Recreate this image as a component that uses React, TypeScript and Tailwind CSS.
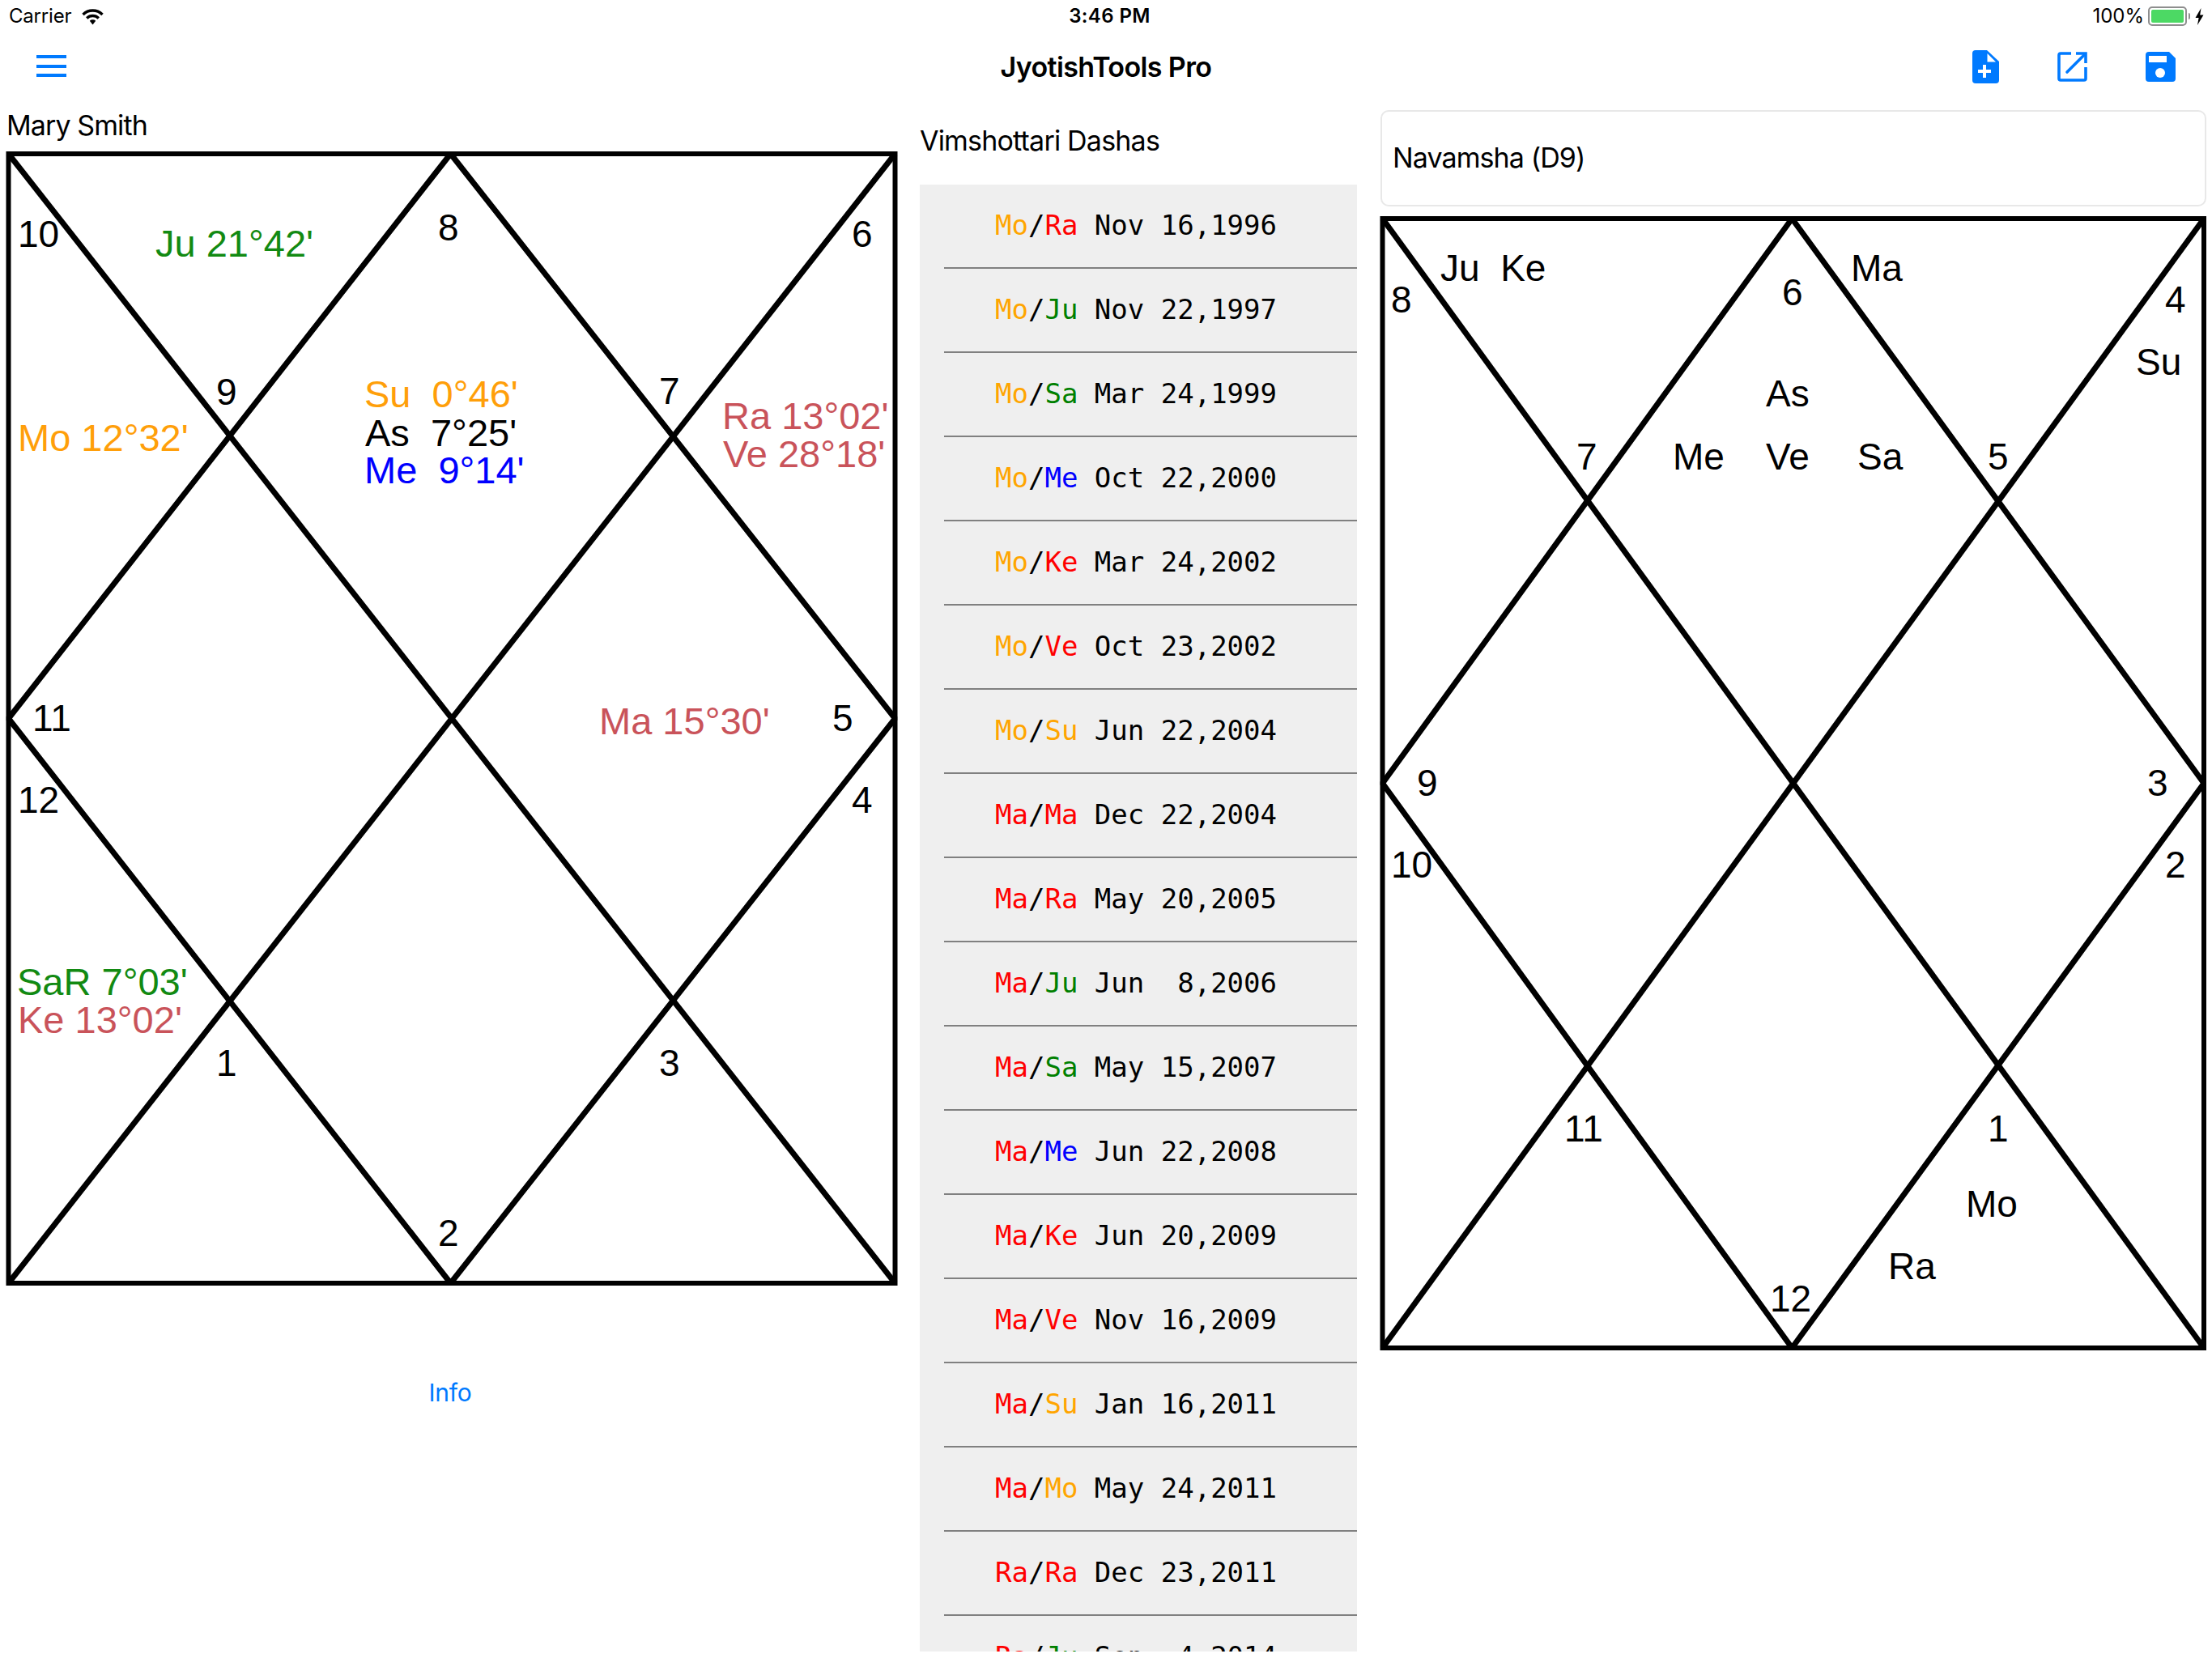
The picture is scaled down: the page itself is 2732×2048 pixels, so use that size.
import React from 'react';

const planetColors: Record<string, string> = {
  Mo: 'text-[#ffa500]',
  Su: 'text-[#ffa500]',
  Ra: 'text-[#ff0000]',
  Ke: 'text-[#ff0000]',
  Ma: 'text-[#ff0000]',
  Ve: 'text-[#ff0000]',
  Ju: 'text-[#008000]',
  Sa: 'text-[#008000]',
  Me: 'text-[#0000ff]',
};

const dashas = [
  ['Mo', 'Ra', 'Nov 16,1996'],
  ['Mo', 'Ju', 'Nov 22,1997'],
  ['Mo', 'Sa', 'Mar 24,1999'],
  ['Mo', 'Me', 'Oct 22,2000'],
  ['Mo', 'Ke', 'Mar 24,2002'],
  ['Mo', 'Ve', 'Oct 23,2002'],
  ['Mo', 'Su', 'Jun 22,2004'],
  ['Ma', 'Ma', 'Dec 22,2004'],
  ['Ma', 'Ra', 'May 20,2005'],
  ['Ma', 'Ju', 'Jun  8,2006'],
  ['Ma', 'Sa', 'May 15,2007'],
  ['Ma', 'Me', 'Jun 22,2008'],
  ['Ma', 'Ke', 'Jun 20,2009'],
  ['Ma', 'Ve', 'Nov 16,2009'],
  ['Ma', 'Su', 'Jan 16,2011'],
  ['Ma', 'Mo', 'May 24,2011'],
  ['Ra', 'Ra', 'Dec 23,2011'],
  ['Ra', 'Ju', 'Sep  4,2014'],
];

// label positions are page coordinates, the svg viewBox is set up to match
type Label = { t: string; x: number; y: number; c?: string };

const ORANGE = '#ff9f0a';
const GREEN = '#128a12';
const ROSE = '#c9535a';
const BLUE = '#0000ff';

const rasiLabels: Label[] = [
  { t: '10', x: 22, y: 305 },
  { t: '8', x: 541, y: 297 },
  { t: '6', x: 1052, y: 305 },
  { t: '9', x: 267, y: 500 },
  { t: '7', x: 814, y: 499 },
  { t: '11', x: 40, y: 903 },
  { t: '5', x: 1028, y: 903 },
  { t: '12', x: 22, y: 1004 },
  { t: '4', x: 1052, y: 1004 },
  { t: '1', x: 267, y: 1329 },
  { t: '3', x: 814, y: 1329 },
  { t: '2', x: 541, y: 1539 },
  { t: "Ju 21°42'", x: 192, y: 317, c: GREEN },
  { t: "Su  0°46'", x: 450, y: 503, c: ORANGE },
  { t: "As  7°25'", x: 451, y: 551 },
  { t: "Me  9°14'", x: 450, y: 597, c: BLUE },
  { t: "Mo 12°32'", x: 22, y: 557, c: ORANGE },
  { t: "Ra 13°02'", x: 892, y: 530, c: ROSE },
  { t: "Ve 28°18'", x: 893, y: 577, c: ROSE },
  { t: "Ma 15°30'", x: 740, y: 907, c: ROSE },
  { t: "SaR 7°03'", x: 21, y: 1229, c: GREEN },
  { t: "Ke 13°02'", x: 22, y: 1276, c: ROSE },
];

const navamshaLabels: Label[] = [
  { t: '8', x: 1718, y: 386 },
  { t: '6', x: 2201, y: 377 },
  { t: '4', x: 2674, y: 386 },
  { t: '7', x: 1947, y: 580 },
  { t: '5', x: 2455, y: 580 },
  { t: '9', x: 1750, y: 983 },
  { t: '3', x: 2652, y: 983 },
  { t: '10', x: 1718, y: 1084 },
  { t: '2', x: 2674, y: 1084 },
  { t: '11', x: 1932, y: 1410 },
  { t: '1', x: 2455, y: 1410 },
  { t: '12', x: 2186, y: 1620 },
  { t: 'Ju  Ke', x: 1779, y: 347 },
  { t: 'Ma', x: 2286, y: 347 },
  { t: 'Su', x: 2638, y: 463 },
  { t: 'As', x: 2181, y: 502 },
  { t: 'Me', x: 2066, y: 580 },
  { t: 'Ve', x: 2181, y: 580 },
  { t: 'Sa', x: 2294, y: 580 },
  { t: 'Mo', x: 2428, y: 1503 },
  { t: 'Ra', x: 2332, y: 1580 },
];

const Chart = ({
  x0,
  y0,
  x1,
  y1,
  labels,
  viewBox,
  width,
  height,
}: {
  x0: number;
  y0: number;
  x1: number;
  y1: number;
  labels: Label[];
  viewBox: string;
  width: number;
  height: number;
}) => {
  // the diamond's top and bottom tips sit a touch left of the true centre
  const mx = (x0 + x1) / 2 - 1.5;
  const my = (y0 + y1) / 2;
  return (
    <svg width={width} height={height} viewBox={viewBox} className="block shrink-0">
      <line x1={x0} y1={y0} x2={x1} y2={y1} stroke="#000" strokeWidth={7} />
      <line x1={x1} y1={y0} x2={x0} y2={y1} stroke="#000" strokeWidth={7} />
      <polygon points={`${mx},${y0} ${x1},${my} ${mx},${y1} ${x0},${my}`} fill="none" stroke="#000" strokeWidth={7} strokeLinejoin="bevel" />
      <rect x={x0} y={y0} width={x1 - x0} height={y1 - y0} fill="none" stroke="#000" strokeWidth={6} />
      {labels.map((l) => (
        <text
          key={l.t + l.x}
          x={l.x}
          y={l.y}
          fill={l.c ?? '#000'}
          fontSize={l.t.includes("'") ? 47 : 46}
          fontFamily="'Liberation Sans', Arial, sans-serif"
          style={{ whiteSpace: 'pre' }}
        >
          {l.t}
        </text>
      ))}
    </svg>
  );
};

const WifiIcon = () => (
  <svg width="27" height="21" viewBox="0 0 27 21" className="ml-[13px]">
    <path d="M1.5 8 A17 17 0 0 1 25.5 8" fill="none" stroke="#000" strokeWidth="3.4" />
    <path d="M6.2 12.5 A10.5 10.5 0 0 1 20.8 12.5" fill="none" stroke="#000" strokeWidth="3.4" />
    <path d="M9.8 15.8 A5.4 5.4 0 0 1 17.2 15.8 L13.5 20.5 Z" fill="#000" />
  </svg>
);

const BatteryIcon = () => (
  <div className="ml-[5px] flex items-center">
    <div className="h-[24px] w-[48px] rounded-[5px] border-2 border-[#8e8e8e] p-[2px]">
      <div className="h-full w-full rounded-[2px] bg-[#4cd964]" />
    </div>
    <div className="ml-[2px] h-[8px] w-[2px] rounded-r-sm bg-[#8e8e8e]" />
    <svg width="11" height="21" viewBox="0 0 11 21" className="ml-[6px]">
      <path d="M7.5 0 L0.5 12 H4.6 L3 21 L10.5 8.5 H6.2 Z" fill="#000" />
    </svg>
  </div>
);

const FilePlusIcon = () => (
  <svg width="33" height="41" viewBox="0 0 33 41">
    <path d="M4 0 H18 L33 14 V37 a4 4 0 0 1 -4 4 H4 a4 4 0 0 1 -4 -4 V4 a4 4 0 0 1 4 -4 Z" fill="#007aff" />
    <path d="M18.5 4 L29 14.5 H18.5 Z" fill="#fff" />
    <path d="M7 26 H23 M15 18 V34" stroke="#fff" strokeWidth="4" fill="none" />
  </svg>
);

const ExternalIcon = () => (
  <svg width="37" height="37" viewBox="0 0 37 37">
    <path d="M17 2 H4 a2 2 0 0 0 -2 2 V33 a2 2 0 0 0 2 2 H33 a2 2 0 0 0 2 -2 V19" fill="none" stroke="#007aff" strokeWidth="3.6" />
    <path d="M23 2 H35 V14" fill="none" stroke="#007aff" strokeWidth="3.6" />
    <path d="M12 25 L34 3" fill="none" stroke="#007aff" strokeWidth="3.6" strokeLinecap="round" />
  </svg>
);

const SaveIcon = () => (
  <svg width="37" height="37" viewBox="0 0 37 37">
    <path d="M4 0 H29 L37 8 V33 a4 4 0 0 1 -4 4 H4 a4 4 0 0 1 -4 -4 V4 a4 4 0 0 1 4 -4 Z" fill="#007aff" />
    <rect x="4" y="5" width="22" height="8" fill="#fff" />
    <circle cx="18" cy="26" r="6" fill="#fff" />
  </svg>
);

export default function App() {
  return (
    <div className="flex h-[2048px] w-[2732px] flex-col overflow-hidden bg-white font-['Inter',sans-serif] text-black">
      {/* status bar */}
      <div className="grid h-[40px] shrink-0 grid-cols-[1fr_auto_1fr] items-center pl-[11px] pr-[10px] text-[24px] leading-none">
        <div className="flex items-center">
          <span className="tracking-[-0.2px]">Carrier</span>
          <WifiIcon />
        </div>
        <span className="ml-[8px] font-semibold tracking-[0.4px]">3:46 PM</span>
        <div className="flex items-center justify-end">
          <span>100%</span>
          <BatteryIcon />
        </div>
      </div>

      {/* nav bar */}
      <div className="relative flex h-[86px] shrink-0 items-center justify-center">
        <div className="absolute left-[45px] top-[28px] flex w-[37px] flex-col gap-[7.5px]">
          <div className="h-[4px] bg-[#007aff]" />
          <div className="h-[4px] bg-[#007aff]" />
          <div className="h-[4px] bg-[#007aff]" />
        </div>
        <span className="text-[34px] font-semibold leading-[40px] tracking-[-0.6px]">JyotishTools Pro</span>
        <div className="absolute right-[45px] top-[22px] flex items-center gap-[72px]">
          <FilePlusIcon />
          <ExternalIcon />
          <SaveIcon />
        </div>
      </div>

      <div className="flex min-h-0 flex-1">
        {/* rasi chart */}
        <div className="w-[1136px] shrink-0">
          <div className="h-[54px] pl-[8px] pt-[9px] text-[34px] leading-[40px] tracking-[-0.9px]">Mary Smith</div>
          <Chart
            x0={10.5}
            y0={190}
            x1={1105.5}
            y1={1585}
            labels={rasiLabels}
            viewBox="0 180 1112 1420"
            width={1112}
            height={1420}
          />
          <div className="mt-[100px] w-[1112px] text-center text-[30px] leading-[40px] tracking-[-0.3px] text-[#007aff]">Info</div>
        </div>

        {/* dasha list */}
        <div className="w-[540px] shrink-0">
          <div className="h-[102px] pt-[28px] text-[34px] leading-[40px] tracking-[-0.8px]">Vimshottari Dashas</div>
          <div className="h-[1812px] overflow-hidden bg-[#efefef] font-['DejaVu_Sans_Mono',monospace] text-[34px]">
            {dashas.map(([a, b, date]) => (
              <div key={a + b + date}>
                <div className="flex h-[102px] items-center justify-center pb-[2px] pr-[6px]">
                  <span className="whitespace-pre">
                    <span className={planetColors[a]}>{a}</span>/<span className={planetColors[b]}>{b}</span> {date}
                  </span>
                </div>
                <div className="ml-[30px] h-[2px] bg-[#808080]" />
              </div>
            ))}
          </div>
        </div>

        {/* navamsha chart */}
        <div className="ml-[24px] flex-1">
          <div className="ml-[5px] mt-[10px] flex h-[119px] w-[1020px] items-center rounded-[10px] border-2 border-[#e8e8e8] pb-[2px] pl-[13px] text-[34px] leading-[40px] tracking-[-0.9px]">
            Navamsha (D9)
          </div>
          <div className="mt-[5px]">
            <Chart
              x0={1707.5}
              y0={270}
              x1={2722}
              y1={1665}
              labels={navamshaLabels}
              viewBox="1700 260 1032 1420"
              width={1032}
              height={1420}
            />
          </div>
        </div>
      </div>
    </div>
  );
}
